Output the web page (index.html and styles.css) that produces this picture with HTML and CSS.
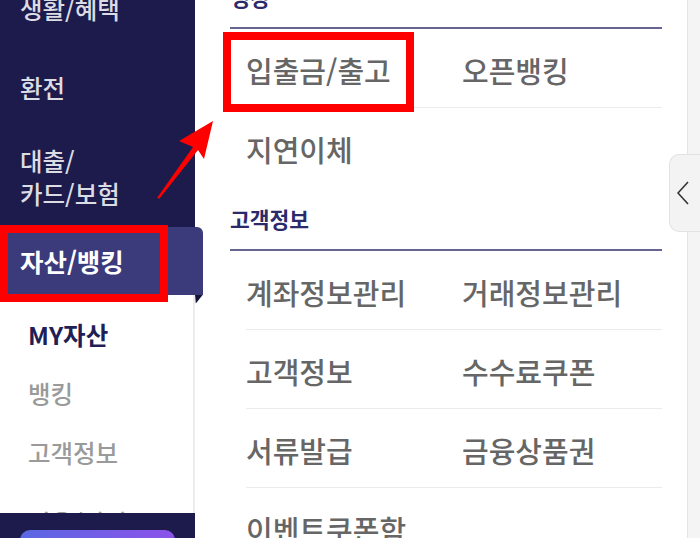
FILE: index.html
```html
<!DOCTYPE html>
<html lang="ko">
<head>
<meta charset="utf-8">
<title>전체메뉴</title>
<link rel="stylesheet" href="styles.css">
</head>
<body>
<div class="app">
  <aside class="sidebar">
    <ul class="nav">
      <li class="nav-item">생활/혜택</li>
      <li class="nav-item">환전</li>
      <li class="nav-item multi">대출/<br>카드/보험</li>
      <li class="nav-item active">자산/뱅킹</li>
    </ul>
    <ul class="sub">
      <li class="current">MY자산</li>
      <li>뱅킹</li>
      <li>고객정보</li>
      <li class="more">이용/상담</li>
    </ul>
    <div class="sidebar-foot"><div class="cta"></div></div>
  </aside>

  <main class="main">
    <section class="group first">
      <h3 class="group-title">뱅킹</h3>
      <ul class="rows">
        <li class="row"><span class="cell">입출금/출고</span><span class="cell">오픈뱅킹</span></li>
        <li class="row"><span class="cell">지연이체</span><span class="cell"></span></li>
      </ul>
    </section>
    <section class="group">
      <h3 class="group-title">고객정보</h3>
      <ul class="rows">
        <li class="row"><span class="cell">계좌정보관리</span><span class="cell">거래정보관리</span></li>
        <li class="row"><span class="cell">고객정보</span><span class="cell">수수료쿠폰</span></li>
        <li class="row"><span class="cell">서류발급</span><span class="cell">금융상품권</span></li>
        <li class="row"><span class="cell">이벤트쿠폰함</span><span class="cell"></span></li>
      </ul>
    </section>
  </main>

  <div class="rail">
    <div class="rail-tab">
      <svg class="chev" width="12" height="24" viewBox="0 0 12 24"><polyline points="11,1 1,12 11,23" fill="none" stroke="#333" stroke-width="1.6"/></svg>
    </div>
  </div>

  <div class="annot">
    <div class="mark mark-a"></div>
    <div class="mark mark-b"></div>
    <svg class="arrow" width="700" height="538" viewBox="0 0 700 538">
      <polygon points="157,198 193,147 179,141 213,121 204,159 198,150 159.5,198.5" fill="#ff0000"/>
    </svg>
  </div>
</div>
</body>
</html>
```
FILE: styles.css
```css
html, body {
  margin: 0;
  padding: 0;
}
body {
  width: 700px;
  height: 538px;
  overflow: hidden;
  font-family: "Noto Sans CJK KR", "Noto Sans", sans-serif;
  background: #fff;
}
.app {
  display: flex;
  height: 538px;
  position: relative;
}

/* sidebar */
.sidebar {
  width: 195px;
  flex: none;
  background: #1c1b4b;
  display: flex;
  flex-direction: column;
  position: relative;
  z-index: 2;
}
.nav {
  list-style: none;
  margin: -31.5px 0 0;
  padding: 0;
}
.nav-item {
  padding: 23px 20px;
  line-height: 33px;
  font-size: 24.5px;
  font-weight: 500;
  color: #dcdce4;
  white-space: nowrap;
}
.nav-item.multi {
  padding: 17px 20px;
}
.nav-item.active {
  background: #3b3a7b;
  color: #fff;
  font-size: 25.5px;
  font-weight: 700;
  padding: 17px 20px 18px;
  margin-right: -8px;
  border-radius: 0 6px 0 0;
  position: relative;
}
.nav-item.active::after {
  content: "";
  position: absolute;
  right: 0;
  top: 100%;
  width: 8px;
  height: 9px;
  background: #13123a;
  clip-path: polygon(0 0, 100% 0, 10% 100%);
}
.sub {
  flex: 1;
  min-height: 0;
  overflow: hidden;
  list-style: none;
  margin: 0;
  padding: 10px 0 0;
  background: #fff;
  border-right: 2px solid #ececec;
}
.sub li {
  padding: 13px 28px;
  line-height: 33px;
  font-size: 24.5px;
  font-weight: 500;
  color: #9a9a9a;
  white-space: nowrap;
}
.sub li.current {
  color: #1f1e55;
  font-weight: 700;
}
.sub li.more {
  margin-top: 11px;
}
.sidebar-foot {
  height: 25px;
  flex: none;
  box-sizing: border-box;
  padding: 17px 20px 0;
  background: #1c1b4b;
  overflow: hidden;
}
.cta {
  height: 30px;
  border-radius: 10px;
  background: linear-gradient(90deg, #5a68e2, #8c52ea);
}

/* main */
.main {
  flex: 1;
  min-width: 0;
  background: #fff;
  padding: 0 25px 0 35px;
  overflow: hidden;
}
.group.first {
  margin-top: -35px;
}
.group-title {
  margin: 0;
  padding: 18px 0 16px;
  line-height: 28px;
  font-size: 21.5px;
  font-weight: 700;
  color: #2b2a6b;
  border-bottom: 2px solid #65658f;
}
.rows {
  list-style: none;
  margin: 0 0 0 16px;
  padding: 0;
}
.row {
  display: grid;
  grid-template-columns: 216px 1fr;
  align-items: center;
  height: 79px;
  box-sizing: border-box;
  padding-top: 3px;
  border-bottom: 1px solid #ebebeb;
}
.row:last-child {
  border-bottom: none;
}
.cell {
  font-size: 29px;
  font-weight: 500;
  line-height: 38px;
  color: #666666;
  white-space: nowrap;
}

/* right rail */
.rail {
  width: 13px;
  flex: none;
  box-sizing: border-box;
  background: #f4f4f4;
  border-left: 1px solid #e4e4e4;
  position: relative;
}
.rail-tab {
  position: absolute;
  left: -19px;
  top: 154px;
  width: 32px;
  height: 78px;
  box-sizing: border-box;
  background: #f3f3f3;
  border: 1px solid #e2e2e2;
  border-right: none;
  border-radius: 10px 0 0 10px;
  display: flex;
  align-items: center;
}
.chev {
  margin-left: 7px;
  display: block;
}

/* annotations */
.annot {
  position: absolute;
  left: 0;
  top: 0;
  width: 700px;
  height: 538px;
  pointer-events: none;
  z-index: 5;
}
.mark {
  position: absolute;
  box-sizing: border-box;
  border: 8px solid #ff0000;
}
.mark-a {
  left: 0;
  top: 225px;
  width: 168px;
  height: 77px;
}
.mark-b {
  left: 223px;
  top: 32px;
  width: 191px;
  height: 80px;
}
.arrow {
  position: absolute;
  left: 0;
  top: 0;
}
```
